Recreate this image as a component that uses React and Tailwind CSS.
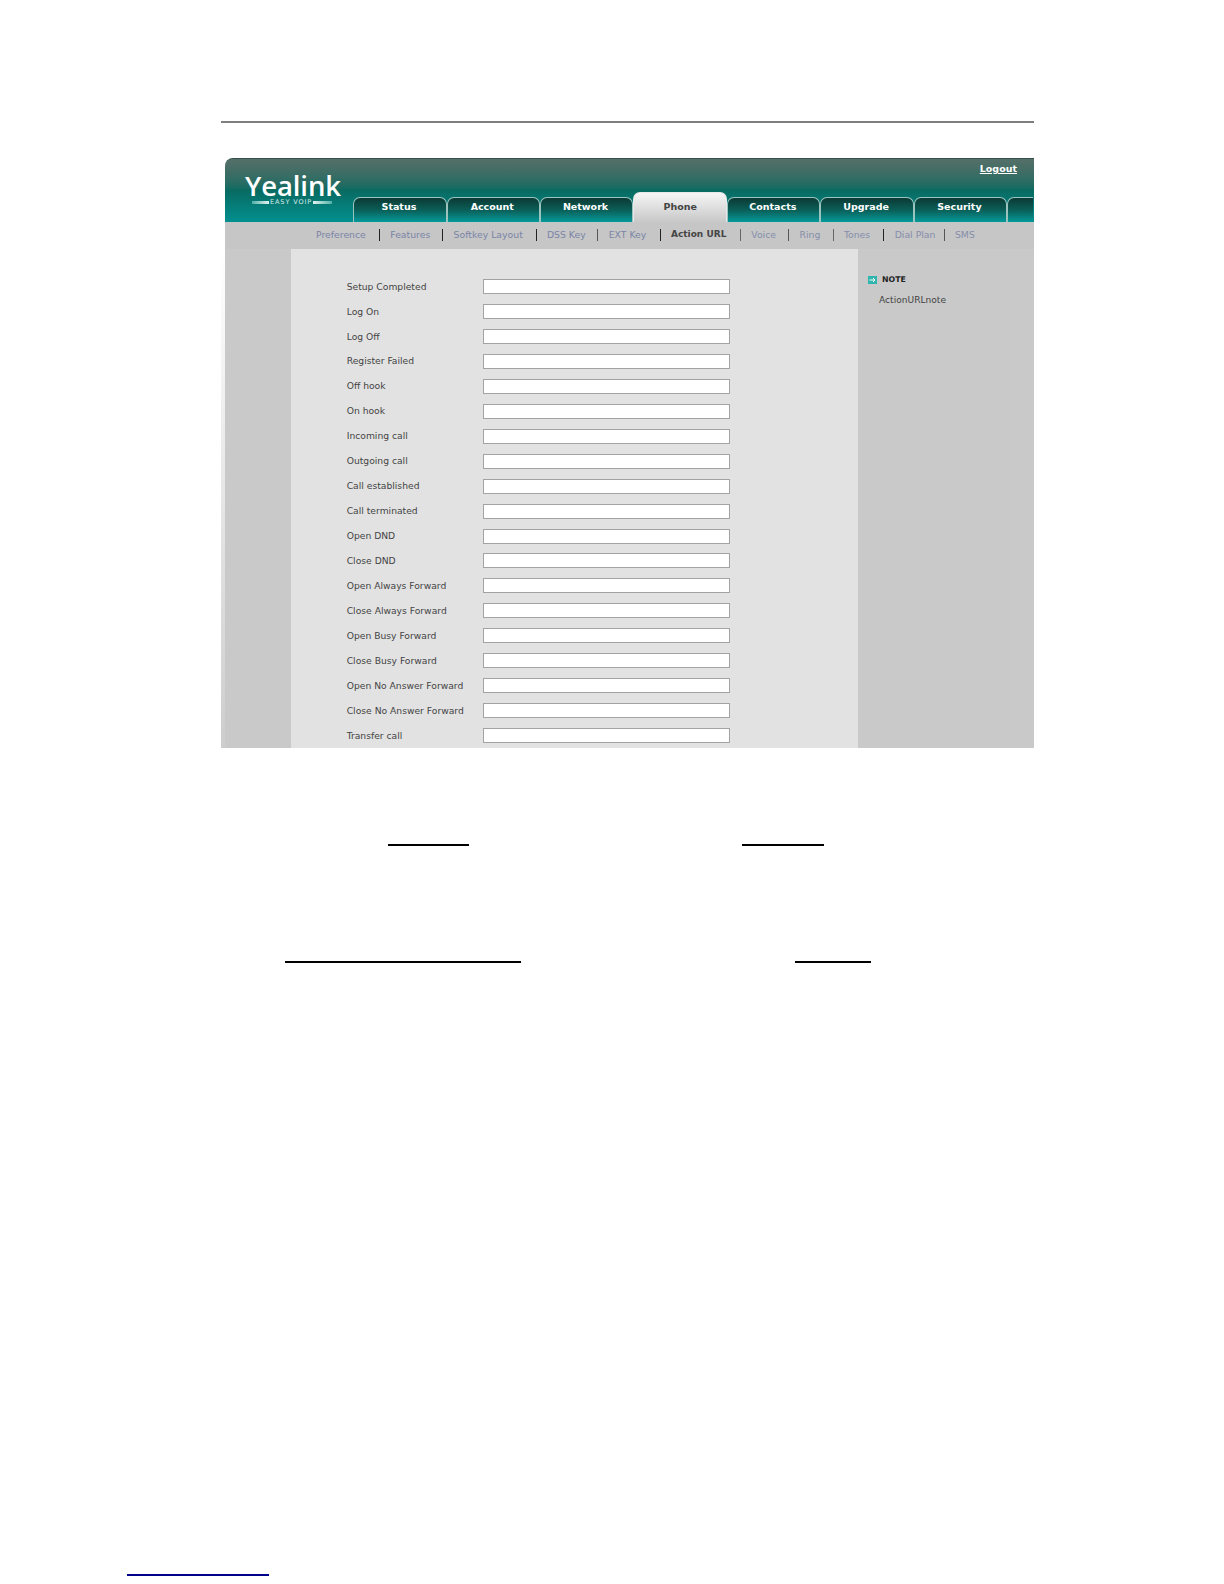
const rows = ["Setup Completed","Log On","Log Off","Register Failed","Off hook","On hook","Incoming call","Outgoing call","Call established","Call terminated","Open DND","Close DND","Open Always Forward","Close Always Forward","Open Busy Forward","Close Busy Forward","Open No Answer Forward","Close No Answer Forward","Transfer call"];
const tabs = ["Status","Account","Network","Phone","Contacts","Upgrade","Security"];
const subs = [
  ["Preference","w-[50px]",""],
  ["Features","w-[39px]","bg-[#222]"],
  ["Softkey Layout","w-[69px]","bg-[#222]"],
  ["DSS Key","w-[37.5px]","bg-[#222]"],
  ["EXT Key","w-[38px]","bg-[#555]"],
  ["Action URL","w-[56px]","bg-[#222]"],
  ["Voice","w-[24px]","bg-[#666]"],
  ["Ring","w-[20px]","bg-[#555]"],
  ["Tones","w-[26.5px]","bg-[#666]"],
  ["Dial Plan","w-[36px]","bg-[#222]"],
  ["SMS","w-[20px]","bg-[#555]"],
];

function Tab({ name }) {
  const on = name === "Phone";
  return (
    <div className={on
      ? "w-[94px] h-[30px] rounded-t-[7px] border border-b-0 border-[#e8e8e8] bg-gradient-to-b from-[#f6f6f6] to-[#c8c8c8] flex items-center justify-center text-[#444] text-[9.5px] font-bold pb-[1px]"
      : "w-[93.3px] h-[25px] rounded-t-[7px] border border-b-0 border-[#9cc4bf] bg-gradient-to-b from-[#0b3a35] via-[#0a5f58] to-[#029a9a] flex items-center justify-center text-white text-[9.5px] font-bold pb-[5px] pr-[2px]"}>
      {name}
    </div>
  );
}

export default function App() {
  return (
    <div className="w-[1224px] h-[1584px] bg-white overflow-hidden font-['DejaVu_Sans',sans-serif]">
      <div className="pt-[121px] pl-[221px]">
        <div className="w-[813px] h-[2px] bg-[#7f7f7f]" />
        <div className="mt-[35px] w-[813px] h-[590px] flex flex-col">
          <div className="ml-[4px] h-[64px] rounded-tl-[8px] border-t border-[#34504a] bg-gradient-to-b from-[#546f68] via-[#086b62] to-[#019090] flex relative">
            <div className="w-[128.3px] pl-[20px] pt-[13px] text-white">
              <div className="font-['Open_Sans',sans-serif] font-semibold text-[27.5px] leading-[27px] tracking-[-0.1px]">Yealink</div>
              <div className="flex items-center pl-[7px] text-[6.5px] leading-[7px] tracking-[0.9px] text-[#d8eeeb] whitespace-nowrap">
                <span className="w-[17px] h-[3px] mr-[1px] bg-gradient-to-r from-[#4db0a8] to-[#e0f2f0]" />EASY VOIP<span className="w-[19px] h-[3px] ml-[1px] bg-gradient-to-r from-[#e0f2f0] to-[#4db0a8]" />
              </div>
            </div>
            <div className="flex items-end self-end">
              {tabs.map(t => <Tab key={t} name={t} />)}
              <div className="w-[26px] h-[25px] rounded-tl-[7px] border-l border-t border-[#9cc4bf] bg-gradient-to-b from-[#0b3a35] via-[#0a5f58] to-[#029a9a]" />
            </div>
            <a className="absolute right-[17px] top-[3px] text-white text-[9.5px] font-bold underline">Logout</a>
          </div>
          <div className="ml-[4px] h-[27px] bg-[#c6c6c6] flex items-center pl-[91px] pb-[1px] text-[9.3px] whitespace-nowrap">
            {subs.map(([s, w, sep], i) => (
              <div key={s} className="flex items-center">
                {i > 0 && <span className={"w-[1px] h-[12px] ml-[13px] mr-[10.3px] " + sep} />}
                <span className={w + (s === "Action URL" ? " text-[#444] font-bold text-[9px]" : i > 5 ? " text-[#858dab]" : " text-[#7a84a6]")}>{s}</span>
              </div>
            ))}
          </div>
          <div className="flex-1 flex bg-[#c9c9c9]">
            <div className="w-[4px] bg-gradient-to-b from-white via-[#e6e6e6] to-[#cdcdcd]" />
            <div className="w-[66px]" />
            <div className="w-[567px] bg-[#e2e2e2] pl-[55.7px] pt-[30px] flex flex-col gap-[9.96px]">
              {rows.map(r => (
                <div key={r} className="h-[15px] flex items-center">
                  <div className="w-[136.6px] text-[9.2px] text-[#444] whitespace-nowrap">{r}</div>
                  <div className="w-[247px] h-[15px] bg-white border border-[#a3a3a3]" />
                </div>
              ))}
            </div>
            <div className="flex-1 pl-[10px] pt-[25px]">
              <div className="flex items-center gap-[5px] text-[7.8px] font-bold text-[#222] leading-[12px]">
                <span className="w-[9px] h-[8px] bg-[#2fb5ad] flex items-center justify-center">
                  <svg viewBox="0 0 9 8" className="w-[9px] h-[8px]" fill="none" stroke="white" strokeWidth="1">
                    <path d="M1.5 4H7M5 2l2 2-2 2" />
                  </svg>
                </span>NOTE
              </div>
              <div className="pl-[11px] mt-[7px] text-[9.1px] leading-[15px] text-[#444]">ActionURLnote</div>
            </div>
          </div>
        </div>
      </div>
      <div className="mt-[96px] pl-[388px] flex">
        <div className="w-[81px] h-[2px] bg-black" />
        <div className="ml-[273px] w-[82px] h-[2px] bg-black" />
      </div>
      <div className="mt-[115px] pl-[285px] flex">
        <div className="w-[236px] h-[2px] bg-black" />
        <div className="ml-[274px] w-[76px] h-[2px] bg-black" />
      </div>
      <div className="mt-[611px] ml-[127px] w-[142px] h-[2px] bg-[#00008b]" />
    </div>
  );
}
